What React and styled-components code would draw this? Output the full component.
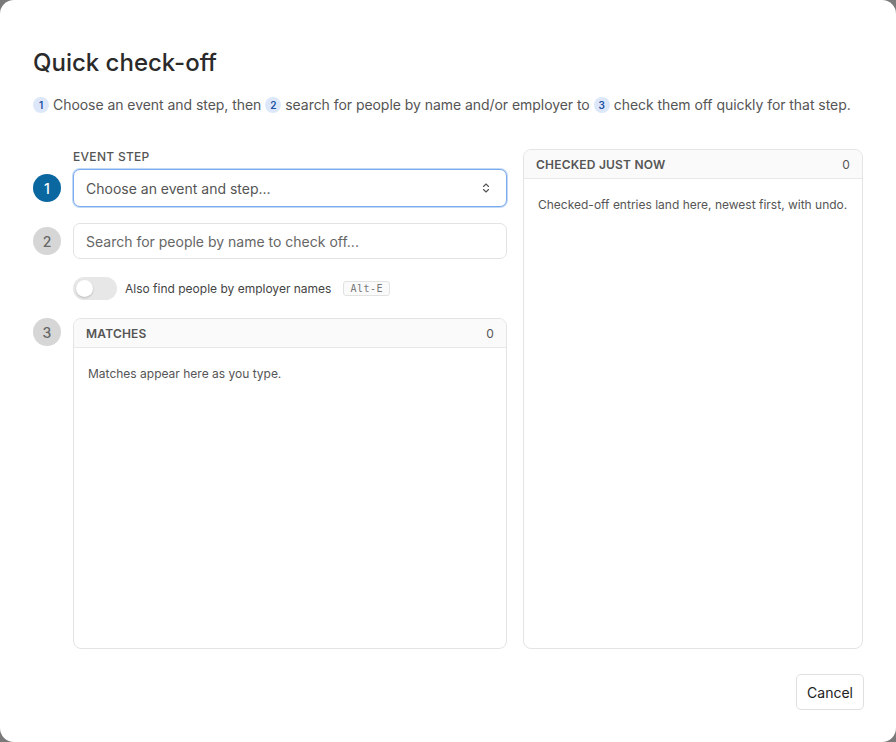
import React from 'react';
import styled, { createGlobalStyle } from 'styled-components';

const GlobalStyle = createGlobalStyle`
  html, body {
    margin: 0;
    padding: 0;
    background: #7a7a7a;
  }
  body {
    font-family: Inter, "Noto Sans", sans-serif;
    color: #222;
  }
  * { box-sizing: border-box; }
`;

const Dialog = styled.div`
  width: 896px;
  height: 742px;
  background: #fff;
  border-radius: 14px;
  padding: 48px 32px 32px 33px;
  display: flex;
  flex-direction: column;
`;

const Title = styled.h2`
  margin: 0;
  font-size: 24px;
  line-height: 30px;
  font-weight: 500;
  color: #2a2a2a;
`;

const Intro = styled.p`
  margin: 17px 0 0;
  font-size: 14px;
  line-height: 20px;
  color: #555;
  display: flex;
  align-items: center;
  gap: 4px;
  white-space: nowrap;
  letter-spacing: -0.05px;
`;

const MiniBadge = styled.span`
  display: inline-flex;
  align-items: center;
  justify-content: center;
  width: 16px;
  height: 16px;
  border-radius: 50%;
  background: #dce8fa;
  color: #1d4fa3;
  font-size: 10px;
  font-weight: 600;
`;

const Columns = styled.div`
  display: grid;
  grid-template-columns: 474px 340px;
  gap: 16px;
  margin-top: 34px;
  flex: 1;
  min-height: 0;
`;

const LeftCol = styled.div`
  display: flex;
  flex-direction: column;
  min-height: 0;
  padding-top: 1px;
`;

const StepRow = styled.div`
  display: grid;
  grid-template-columns: 28px 1fr;
  column-gap: 12px;
  align-items: ${(p) => (p.$top ? 'start' : 'center')};
  margin-top: ${(p) => p.$mt || 0}px;
  flex: ${(p) => (p.$grow ? 1 : 'none')};
  min-height: 0;
`;

const StepDot = styled.span`
  width: 28px;
  height: 28px;
  border-radius: 50%;
  display: flex;
  align-items: center;
  justify-content: center;
  font-size: 14px;
  font-weight: 500;
  background: ${(p) => (p.$active ? '#0b67a0' : '#d6d6d6')};
  color: ${(p) => (p.$active ? '#fff' : '#666')};
`;

const FieldLabel = styled.div`
  grid-column: 2;
  font-size: 12px;
  font-weight: 500;
  letter-spacing: 0.3px;
  color: #555;
  text-transform: uppercase;
  line-height: 14px;
  margin-bottom: 5px;
`;

const Select = styled.button`
  height: 38px;
  width: 100%;
  border: 1px solid #7aabec;
  box-shadow: 0 0 0 1px #c3daf7;
  border-radius: 7px;
  background: #fff;
  padding: 0 14px 0 12px;
  display: flex;
  align-items: center;
  justify-content: space-between;
  font-family: inherit;
  font-size: 14px;
  color: #555;
`;

const TextInput = styled.input`
  height: 36px;
  width: 100%;
  border: 1px solid #e3e3e3;
  border-radius: 7px;
  padding: 0 12px;
  font-family: inherit;
  font-size: 14px;
  color: #222;
  outline: none;
  &::placeholder { color: #666; }
`;

const ToggleRow = styled.div`
  display: flex;
  align-items: center;
  gap: 8px;
  margin: 18px 0 0 40px;
  font-size: 12px;
  color: #444;
`;

const Switch = styled.span`
  width: 44px;
  height: 23px;
  border-radius: 12px;
  background: #e7e7e7;
  padding: 3px;
  display: flex;
  align-items: center;
  &::after {
    content: '';
    width: 17px;
    height: 17px;
    border-radius: 50%;
    background: #fff;
    box-shadow: 0 1px 2px rgba(0, 0, 0, 0.2);
  }
`;

const Kbd = styled.kbd`
  margin-left: 4px;
  font-family: "DejaVu Sans Mono", "Liberation Mono", monospace;
  font-size: 10px;
  color: #777;
  border: 1px solid #e2e2e2;
  border-radius: 3px;
  padding: 1px 6px;
  background: #fafafa;
  letter-spacing: 0.5px;
`;

const Panel = styled.section`
  border: 1px solid #e4e4e4;
  border-radius: 8px;
  display: flex;
  flex-direction: column;
  height: 100%;
  overflow: hidden;
`;

const PanelHead = styled.header`
  height: 29px;
  flex: none;
  background: #fafafa;
  border-bottom: 1px solid #e8e8e8;
  display: flex;
  align-items: center;
  justify-content: space-between;
  padding: 0 12px;
  font-size: 12px;
  font-weight: 600;
  letter-spacing: 0.2px;
  color: #555;
  text-transform: uppercase;
`;

const Count = styled.span`
  font-weight: 400;
  color: #555;
`;

const Empty = styled.p`
  margin: 0;
  padding: 18px 14px;
  font-size: 12px;
  color: #555;
  line-height: 16px;
`;

const Footer = styled.div`
  display: flex;
  justify-content: flex-end;
  margin-top: 25px;
`;

const Button = styled.button`
  height: 36px;
  padding: 0 10px;
  border: 1px solid #e0e0e0;
  border-radius: 5px;
  background: #fff;
  font-family: inherit;
  font-size: 14px;
  color: #222;
`;

const UpDown = () => (
  <svg width="12" height="12" viewBox="0 0 24 24" fill="none" stroke="#555" strokeWidth="2.2" strokeLinecap="round" strokeLinejoin="round">
    <path d="m7 15 5 5 5-5" />
    <path d="m7 9 5-5 5 5" />
  </svg>
);

export default function App() {
  return (
    <>
      <GlobalStyle />
      <Dialog>
        <Title>Quick check-off</Title>
        <Intro>
          <MiniBadge>1</MiniBadge> Choose an event and step, then
          <MiniBadge>2</MiniBadge> search for people by name and/or employer to
          <MiniBadge>3</MiniBadge> check them off quickly for that step.
        </Intro>

        <Columns>
          <LeftCol>
            <StepRow>
              <FieldLabel>Event step</FieldLabel>
              <StepDot $active>1</StepDot>
              <Select>
                Choose an event and step...
                <UpDown />
              </Select>
            </StepRow>

            <StepRow $mt={16}>
              <StepDot>2</StepDot>
              <TextInput placeholder="Search for people by name to check off..." />
            </StepRow>

            <ToggleRow>
              <Switch />
              Also find people by employer names
              <Kbd>Alt-E</Kbd>
            </ToggleRow>

            <StepRow $top $grow $mt={18}>
              <StepDot>3</StepDot>
              <Panel>
                <PanelHead>
                  Matches <Count>0</Count>
                </PanelHead>
                <Empty>Matches appear here as you type.</Empty>
              </Panel>
            </StepRow>
          </LeftCol>

          <Panel>
            <PanelHead>
              Checked just now <Count>0</Count>
            </PanelHead>
            <Empty>Checked-off entries land here, newest first, with undo.</Empty>
          </Panel>
        </Columns>

        <Footer>
          <Button>Cancel</Button>
        </Footer>
      </Dialog>
    </>
  );
}
